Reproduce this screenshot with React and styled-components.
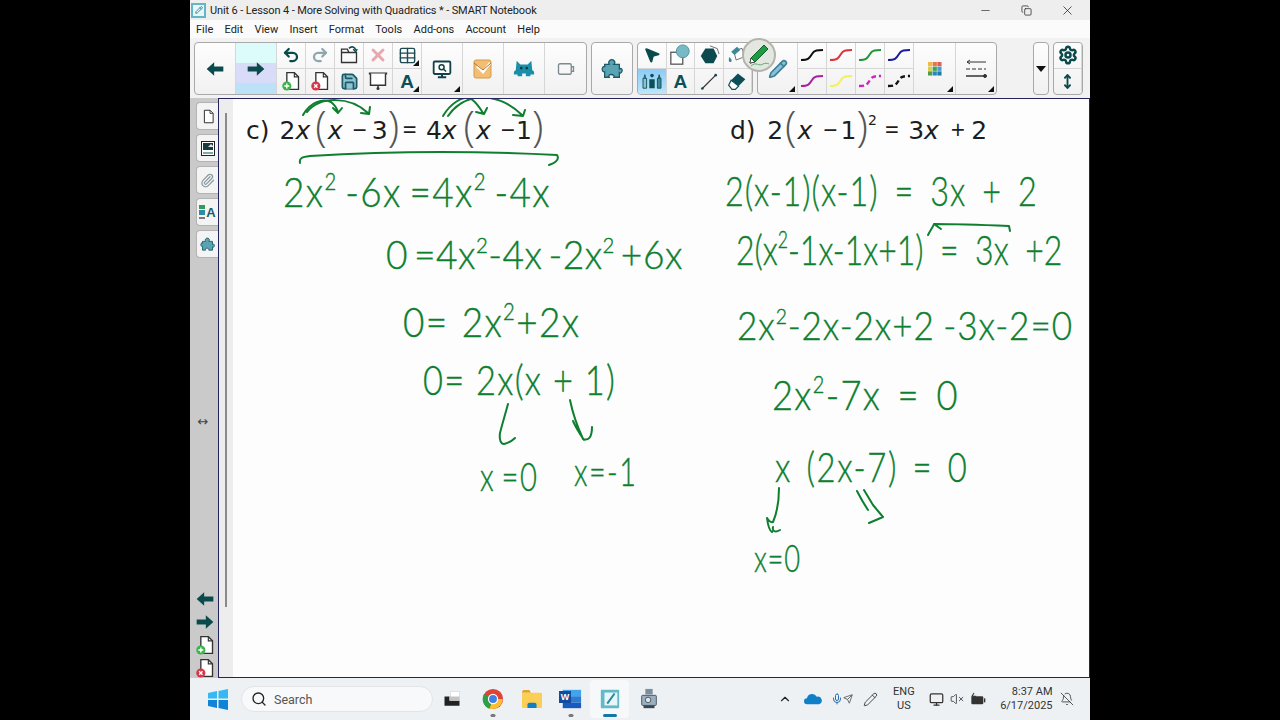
import React from 'react'
import styled, { createGlobalStyle } from 'styled-components'
import { Undo2, Redo2, X, Table, Save, Search, ChevronUp, Mic, Send, VolumeX, Minus, Settings, MoveVertical, Copy, Monitor, BellOff, Pencil, MousePointer2, Paperclip } from 'lucide-react'

const GlobalStyle = createGlobalStyle`
    html, body { margin: 0; padding: 0; background: #000; height: 100%; overflow: hidden; }
    * { box-sizing: border-box; }
`

const Frame = styled.div`
    width: 900px;
    height: 720px;
    margin: 0 auto;
    display: flex;
    flex-direction: column;
    background: #f0f0f0;
    font-family: Roboto, "Noto Sans", sans-serif;
    color: #222;
`

const TitleBar = styled.div`
    height: 20px;
    display: flex;
    align-items: center;
    padding: 0 2.5px 0 1px;
    background: #eeeeee;
    font-size: 11px;
    letter-spacing: -0.13px;
`

const AppBadge = styled.span`
    width: 15px;
    height: 15px;
    margin-right: 4px;
    display: flex;
    align-items: center;
    justify-content: center;
    border: 2px solid #62b6c6;
    background: #e8f6f8;
    color: #3a8fa3;
`

const TitleText = styled.span`
    flex: 1;
`

const WindowButton = styled.span`
    width: 41px;
    height: 20px;
    display: flex;
    align-items: center;
    justify-content: center;
    color: #222;
`

const MenuBar = styled.div`
    height: 18px;
    display: flex;
    align-items: center;
    gap: 11.25px;
    padding-left: 6px;
    background: #fbfbfb;
    font-size: 11px;
`

const Toolbar = styled.div`
    height: 60px;
    display: flex;
    gap: 4px;
    padding: 4px 0 3px 4px;
    background: #f2f2f2;
    position: relative;
`

const ToolGroup = styled.div`
    display: flex;
    height: 53px;
    border: 1px solid #a9a9a9;
    border-radius: 4px;
    overflow: hidden;
    background: linear-gradient(#fdfdfd, #f1f1f1);
    margin-left: ${p => p.$gap || 0}px;
`

const BigCell = styled.div`
    position: relative;
    width: ${p => p.$w || 41}px;
    display: flex;
    align-items: center;
    justify-content: center;
    border-right: 1px solid #d6d6d6;
    background: ${p => p.$active ? 'linear-gradient(#dcfbfb 0 40%, #d9dcf8 40% 78%, #bde2f8 78%)' : 'transparent'};
    &:last-child { border-right: 0; }
`

const SmallGrid = styled.div`
    display: grid;
    grid-template-columns: repeat(${p => p.$cols}, ${p => p.$cw || 29}px);
    grid-template-rows: 1fr 1fr;
`

const SmallCell = styled.div`
    position: relative;
    display: flex;
    align-items: center;
    justify-content: center;
    border-right: 1px solid #d6d6d6;
    border-bottom: 1px solid #d6d6d6;
    background: ${p => p.$active ? 'linear-gradient(#8ccbf5, #bfe5fb)' : 'transparent'};
    &:nth-child(n + ${p => p.$cols + 1}) { border-bottom: 0; }
`

const Corner = styled.span`
    position: absolute;
    right: 2px;
    bottom: 2px;
    width: 0;
    height: 0;
    border-left: 6px solid transparent;
    border-bottom: 6px solid #111;
`

const PenBubble = styled.div`
    position: absolute;
    left: 552px;
    top: 0;
    width: 34px;
    height: 34px;
    border-radius: 50%;
    border: 2px solid #b4b4ae;
    background: #e4e6e0;
    display: flex;
    align-items: center;
    justify-content: center;
`

const LetterA = styled.span`
    font-family: "Liberation Sans", sans-serif;
    font-weight: 700;
    font-size: ${p => p.$size || 19}px;
    line-height: 1;
    color: ${p => p.$color || '#0c4f57'};
`

const Workspace = styled.div`
    height: 580px;
    display: flex;
    background: #c9c9c9;
`

const SideTabs = styled.div`
    width: 28px;
    display: flex;
    flex-direction: column;
    align-items: flex-end;
    padding-top: 4px;
    gap: 4px;
    background: #cacaca;
`

const SideTab = styled.div`
    width: 22px;
    height: 28px;
    display: flex;
    align-items: center;
    justify-content: center;
    gap: 1px;
    border: 1px solid #b3b3b3;
    border-right: 0;
    border-radius: 4px 0 0 4px;
    background: #f4f4f4;
`

const ResizeMark = styled.div`
    width: 100%;
    margin-top: 150px;
    height: 20px;
    text-align: center;
    font-family: "DejaVu Sans", sans-serif;
    font-size: 13px;
    line-height: 20px;
    padding-right: 2px;
    color: #444;
`

const SideFoot = styled.div`
    width: 100%;
    margin-top: auto;
    display: flex;
    flex-direction: column;
    align-items: center;
    gap: 3px;
    padding: 0 0 0 2px;
`

const Stage = styled.div`
    flex: 1;
    display: flex;
    border: 1.5px solid #23235f;
`

const Gutter = styled.div`
    width: 14px;
    background: #ededed;
    position: relative;
`

const ScrollThumb = styled.div`
    position: absolute;
    left: 6px;
    top: 14px;
    width: 2px;
    height: 494px;
    background: #8a8a8a;
`

const Page = styled.div`
    flex: 1;
    position: relative;
    background: #fdfdfd;
`

const InkLayer = styled.svg`
    position: absolute;
    left: 0;
    top: 0;
    width: 855px;
    height: 577px;
    pointer-events: none;
`

/* handwriting, placed where it sits on the page */
const Ink = styled.div`
    position: absolute;
    left: ${p => p.$x - 233}px;
    top: ${p => p.$base - 99 - p.$size}px;
    white-space: pre;
    line-height: ${p => p.$size * 1.25}px;
    font-family: "Lato", sans-serif;
    font-weight: 300;
    font-size: ${p => p.$size}px;
    letter-spacing: ${p => p.$ls || 0}px;
    word-spacing: ${p => p.$ws || 0}px;
    color: #0e7f2f;
    -webkit-text-stroke: 0.4px #0e7f2f;
    transform: scaleX(${p => p.$sx || 1});
    transform-origin: left center;
`

const Sup = styled.span`
    font-size: 0.55em;
    position: relative;
    top: -0.75em;
`

/* the typed exercise lines */
const Typed = styled.div`
    position: absolute;
    left: ${p => p.$x - 233}px;
    top: 3px;
    height: 44px;
    line-height: 44px;
    white-space: pre;
    font-family: "DejaVu Sans", sans-serif;
    font-size: 25px;
    color: #1d1d1d;
`

const Part = styled.span`
    margin-left: ${p => p.$l || 0}px;
`

const Var = styled(Part)`
    font-style: italic;
`

const Op = styled(Part)`
    font-family: "Open Sans", sans-serif;
`

const Paren = styled(Part)`
    font-family: "Open Sans", sans-serif;
    font-weight: 300;
    font-size: 42px;
    line-height: 42px;
    color: #555;
    position: relative;
    top: 2px;
`

const TypedSup = styled(Part)`
    font-size: 14px;
    position: relative;
    top: -14px;
`

const Taskbar = styled.div`
    height: 42px;
    display: flex;
    align-items: center;
    background: #eef1f4;
    padding-left: 17px;
`

const StartButton = styled.div`
    width: 22px;
    height: 22px;
    margin-right: 12px;
`

const SearchBox = styled.div`
    width: 192px;
    height: 26px;
    display: flex;
    align-items: center;
    gap: 7px;
    padding-left: 9px;
    border: 1px solid #e2e4e6;
    border-radius: 13px;
    background: #f8f9fa;
    color: #555;
    font-size: 12.5px;
`

const TaskIcons = styled.div`
    display: flex;
    margin-left: -1px;
`

const TaskIcon = styled.div`
    position: relative;
    width: 39px;
    height: 38px;
    display: flex;
    align-items: center;
    justify-content: center;
    margin-right: ${p => p.$after || 0}px;
    background: ${p => p.$active ? '#f6f8fa' : 'transparent'};
    border-radius: 4px;
    &::after {
        content: '';
        display: ${p => p.$mark ? 'block' : 'none'};
        position: absolute;
        bottom: 1px;
        left: 50%;
        transform: translateX(-50%);
        height: 3px;
        width: ${p => p.$mark === 'on' ? 14 : 5}px;
        border-radius: 2px;
        background: ${p => p.$mark === 'on' ? '#1178a8' : '#777'};
    }
`

const Tray = styled.div`
    margin-left: auto;
    display: flex;
    align-items: center;
    gap: 6px;
    padding-right: 16px;
    font-size: 11px;
    color: #333;
`

const TrayItem = styled.span`
    display: flex;
    align-items: center;
    margin-left: ${p => p.$l || 0}px;
`

const TrayStack = styled.div`
    display: flex;
    flex-direction: column;
    align-items: ${p => p.$align || 'center'};
    line-height: 14px;
    margin: 0 ${p => p.$mr || 0}px 0 ${p => p.$ml || 0}px;
`

const page = { dark: '#0a4a4c', teal: '#3e8797' }

const Arrow = ({ left, size = 20, color = page.dark }) => (
    <svg width={size} height={size} viewBox="0 0 24 24">
        <path d={left ? 'M2 12 11 4V9H22V15H11V20Z' : 'M22 12 13 4V9H2V15H13V20Z'} fill={color} />
    </svg>
)

const PageIcon = ({ badge, size = 20 }) => (
    <svg width={size} height={size} viewBox="0 0 24 24">
        <path d="M7 2H16L21 7V22H7Z" fill="#fff" stroke="#333" strokeWidth="1.6" />
        <path d="M16 2V7H21" fill="none" stroke="#333" strokeWidth="1.4" />
        {badge && <circle cx="7" cy="18" r="5.5" fill={badge} />}
        {badge && <path d={badge === '#3cb44b' ? 'M4 18H10M7 15V21' : 'M5 16 9 20M9 16 5 20'} stroke="#fff" strokeWidth="1.6" />}
    </svg>
)

const OpenFile = () => (
    <svg width="20" height="20" viewBox="0 0 24 24" fill="none" stroke="#333" strokeWidth="1.6">
        <path d="M3 9H21V21H3ZM3 9V5H10L12 9" />
        <path d="M12 4C15 1 19 2 20 6" stroke={page.dark} strokeWidth="2" />
        <path d="M17 5 20 8 22 5" stroke={page.dark} strokeWidth="1.6" />
    </svg>
)

const Screen = () => (
    <svg width="20" height="20" viewBox="0 0 24 24" fill="none" stroke="#333" strokeWidth="1.7">
        <path d="M1 3H23" strokeWidth="2.4" />
        <path d="M3 3V17H21V3" fill="#fff" />
        <path d="M12 17V21" />
        <circle cx="12" cy="21" r="1" />
    </svg>
)

const Capture = () => (
    <svg width="20" height="20" viewBox="0 0 24 24">
        <rect x="2" y="3" width="20" height="15" rx="1.5" fill="#fff" stroke="#13414a" strokeWidth="2.2" />
        <circle cx="11.5" cy="10" r="3" fill="none" stroke="#13414a" strokeWidth="1.8" />
        <path d="M14 12.5 17 15" stroke="#13414a" strokeWidth="1.8" />
        <path d="M12 18V21M7 22H17" stroke="#13414a" strokeWidth="2.4" />
    </svg>
)

const Gallery = () => (
    <svg width="14" height="15" viewBox="0 0 14 15">
        <rect x="0.5" y="0.5" width="13" height="14" fill="#fff" stroke="#222" />
        <rect x="2" y="2" width="10" height="7" fill="#183a40" />
        <path d="M7 6 10 3 12 5V6Z" fill="#e6e6e6" />
        <rect x="2" y="11" width="10" height="2" fill="#7fa7ae" />
    </svg>
)

const Response = () => (
    <svg width="24" height="24" viewBox="0 0 24 24">
        <rect x="3" y="3" width="17" height="18" rx="2" fill="#f3bd74" stroke="#d49a4a" />
        <path d="M6 9 12 15 19 6" fill="none" stroke="#fff" strokeWidth="2.6" />
        <path d="M3 6 12 13 20 6" fill="none" stroke="#a9772f" strokeWidth="1" />
    </svg>
)

const Monster = () => (
    <svg width="22" height="22" viewBox="0 0 24 24">
        <path d="M4 3 8 7H16L20 3 21 13 23 15V18H19V20H14V17H10V20H5V18H1V15L3 13Z" fill="#1c8fa8" />
        <circle cx="9" cy="11" r="1.5" fill="#083b47" />
        <circle cx="15" cy="11" r="1.5" fill="#083b47" />
    </svg>
)

const Record = () => (
    <svg width="18" height="18" viewBox="0 0 24 24" fill="none" stroke="#7d8a8f" strokeWidth="1.8">
        <rect x="2" y="5" width="17" height="14" rx="2" />
        <path d="M19 9H22V15H19" />
    </svg>
)

const PuzzlePiece = ({ size = 22 }) => (
    <svg width={size} height={size} viewBox="0 0 24 24">
        <path d="M9 7C7 3 11 1 13 2 15 3 16 5 14 7H20V12C23 10 24 14 22 16 21 17 21 17 20 16V21H14C15 19 13 18 11 18 9 18 8 19 9 21H4V15C1 16 1 11 2 10 3 9 4 9 4 10V7Z" fill="#5aa3b2" stroke="#1c5a68" strokeWidth="1.4" />
    </svg>
)

const Shapes = () => (
    <svg width="22" height="22" viewBox="0 0 24 24">
        <rect x="2" y="9" width="13" height="13" fill="#fff" stroke="#555" strokeWidth="1.4" />
        <circle cx="15" cy="8" r="7" fill="#78b9c6" stroke="#4f8f9d" />
    </svg>
)

const Hexagon = () => (
    <svg width="22" height="22" viewBox="0 0 24 24">
        <path d="M13 2 21 5 23 11" fill="none" stroke="#666" />
        <path d="M8 5H17L21 13 17 21H8L3 13Z" fill="#0d4a50" />
    </svg>
)

const Fill = () => (
    <svg width="20" height="20" viewBox="0 0 24 24">
        <path d="M8 7 18 4 21 14 11 18Z" fill="#fff" stroke="#555" />
        <path d="M3 14C1 18 3 22 5 20 7 18 4 16 3 14Z" fill="#3e8797" />
        <path d="M5 8 12 2 16 6 9 12Z" fill="#3e8797" />
    </svg>
)

const Pens = () => (
    <svg width="22" height="18" viewBox="0 0 24 20">
        <path d="M2 7H6V18H2ZM3 7 4 3 5 7" fill="#8fc1cc" stroke="#0c4f57" />
        <circle cx="12" cy="4" r="2" fill="#0c4f57" />
        <path d="M9 8H15V18H9Z" fill="#0c4f57" />
        <path d="M18 7H22V18H18ZM19 7 20 3 21 7" fill="#3e8797" stroke="#0c4f57" />
    </svg>
)

const Line = () => (
    <svg width="20" height="20" viewBox="0 0 24 24">
        <path d="M4 21 20 5" stroke="#333" strokeWidth="1.4" />
        <circle cx="4" cy="21" r="1.6" fill="#0c4f57" />
        <circle cx="20" cy="5" r="1.6" fill="#0c4f57" />
    </svg>
)

const EraserIcon = () => (
    <svg width="20" height="20" viewBox="0 0 24 24">
        <path d="M13 3 22 10 14 18 5 11Z" fill="#0c4f57" />
        <path d="M5 11 14 18 10 22H6L2 17Z" fill="#fff" stroke="#0c4f57" strokeWidth="1.4" />
    </svg>
)

const Squiggle = ({ color, dash, width = 2 }) => (
    <svg width="24" height="16" viewBox="0 0 24 16">
        <path d="M1 13C8 13 9 12 12 7 14 3 18 3 23 3" fill="none" stroke={color} strokeWidth={width} strokeDasharray={dash} />
    </svg>
)

const BubblePen = () => (
    <svg width="26" height="26" viewBox="0 0 26 26">
        <path d="M5 16 18 3 22 7 9 20 4 21Z" fill="#1f9a45" stroke="#14602c" />
        <path d="M4 21 5 16 9 20Z" fill="#fff" stroke="#333" strokeWidth="0.8" />
        <path d="M5 24C10 19 13 25 17 22 19 21 21 21 23 22" fill="none" stroke="#5cab72" />
    </svg>
)

const Palette = () => (
    <svg width="14" height="14" viewBox="0 0 12 12">
        {['#f0b94a', '#e6793f', '#dd5f5a', '#d9cf3f', '#3ba55d', '#4a9ad6', '#4f9e4f', '#2e86c1', '#1b7fa3'].map((c, i) => (
            <rect key={i} x={(i % 3) * 4} y={Math.floor(i / 3) * 4} width="3.6" height="3.6" fill={c} />
        ))}
    </svg>
)

const LineStyles = () => (
    <svg width="24" height="20" viewBox="0 0 24 20" fill="none" stroke="#333">
        <path d="M3 3H22" strokeWidth="1.2" />
        <path d="M6 1 3 3 6 5" strokeWidth="1" />
        <path d="M2 10H22" strokeWidth="1.2" strokeDasharray="4 2" />
        <path d="M2 17H22" strokeWidth="1.4" />
        <circle cx="21" cy="17" r="1.5" fill="#333" />
    </svg>
)

const SmallCaret = () => (
    <svg width="10" height="6" viewBox="0 0 10 6"><path d="M0 0H10L5 6Z" fill="#111" /></svg>
)

const Bars = () => (
    <svg width="6" height="16" viewBox="0 0 6 16">
        <rect y="1" width="6" height="4" fill="#2f9c5a" />
        <rect y="6" width="6" height="5" fill="#2f8aa5" />
        <rect y="13" width="6" height="2" fill="#7a7a7a" />
    </svg>
)

const WinLogo = () => (
    <svg width="22" height="22" viewBox="0 0 22 22">
        <path d="M1 5 10 3V10.5H1Z" fill="#35b8f3" />
        <path d="M11.5 3 21 1V10.5H11.5Z" fill="#35b8f3" />
        <path d="M1 12H10V20L1 18Z" fill="#0f84d6" />
        <path d="M11.5 12H21V22L11.5 20Z" fill="#0f84d6" />
    </svg>
)

const Chrome = () => (
    <svg width="22" height="22" viewBox="0 0 24 24">
        <circle cx="12" cy="12" r="11" fill="#dd4437" />
        <path d="M12 12 22.5 12A11 11 0 0 1 8 22.3Z" fill="#fbc02d" />
        <path d="M12 12 8 22.5A11 11 0 0 1 2.3 6.5Z" fill="#2e9e48" />
        <circle cx="12" cy="12" r="5.6" fill="#fff" />
        <circle cx="12" cy="12" r="4.3" fill="#3f7fe6" />
    </svg>
)

const Folder = () => (
    <svg width="22" height="20" viewBox="0 0 24 22">
        <path d="M1 4C1 2 2 1 3 1H9L11 4Z" fill="#e0a325" />
        <rect x="1" y="4" width="22" height="17" rx="1.5" fill="#fbcf55" />
        <path d="M7 21V17C7 16 8 15 9 15H15C16 15 17 16 17 17V21Z" fill="#127fc4" />
    </svg>
)

const WordMark = styled.span`
    position: absolute;
    left: 8px;
    top: 11px;
    width: 12px;
    height: 12px;
    background: #124a9c;
    color: #fff;
    font: 700 9px/12px "Liberation Sans", sans-serif;
    text-align: center;
`

const Word = () => (
    <svg width="22" height="22" viewBox="0 0 24 24">
        <rect x="3" y="2" width="20" height="7" fill="#41a5ee" />
        <rect x="3" y="9" width="20" height="7" fill="#2b7cd3" />
        <rect x="3" y="16" width="20" height="6" fill="#185abd" />
    </svg>
)

const Notebook = ({ size = 22 }) => (
    <svg width={size} height={size} viewBox="0 0 24 24">
        <rect x="2" y="2" width="20" height="20" rx="1" fill="#62bac8" />
        <rect x="6" y="5" width="14" height="14" fill="#e7f6f8" />
        <path d="M9 17 17 6" stroke="#2f8798" strokeWidth="2.2" />
    </svg>
)

const Snip = () => (
    <svg width="22" height="24" viewBox="0 0 24 24">
        <rect x="8" y="1" width="8" height="6" fill="#7b8ea0" />
        <rect x="4" y="8" width="16" height="11" rx="1" fill="#9ab0c0" stroke="#44515c" />
        <circle cx="11" cy="13" r="3" fill="#dfe7ec" stroke="#44515c" />
        <rect x="6" y="19" width="12" height="3" fill="#3a4650" />
    </svg>
)

const Cloud = () => (
    <svg width="18" height="14" viewBox="0 0 24 16"><path d="M4 15A4 4 0 0 1 4 7 7 7 0 0 1 17 5 5 5 0 0 1 20 15Z" fill="#0f80c8" /></svg>
)

const Stack = () => (
    <svg width="20" height="20" viewBox="0 0 24 24">
        <rect x="10" y="3" width="11" height="11" fill="#fff" stroke="#ddd" />
        <path d="M3 9H9V14H21V20H3Z" fill="#222" />
        <path d="M9 9H21V14H9Z" fill="#c4c4c4" />
    </svg>
)

const Battery = () => (
    <svg width="16" height="14" viewBox="0 0 24 20">
        <rect x="2" y="6" width="18" height="12" rx="2" fill="#333" />
        <rect x="21" y="9" width="2" height="6" fill="#333" />
        <path d="M6 1 3 6H8L5 10" fill="none" stroke="#333" strokeWidth="1.6" />
    </svg>
)

const curves = [
    // arcs over the left equation
    'M303 115C310 102 323 98 331 102 335 105 337 109 338 112M333 108 338 113 342 108',
    'M307 112C320 96 350 96 368 113M361 113 369 114 370 107',
    'M443 116C450 104 462 96 470 98 476 102 480 108 483 113M476 112 484 114 487 108',
    'M448 116C456 104 466 100 474 98M490 98C502 100 514 107 522 115M513 115 523 116 525 110',
    // bracket under it
    'M300 163C299 158 302 157 310 156 390 151 480 151 557 155 559 158 558 162 549 165',
    // right overline
    'M1010 231 1009 226C985 225 955 224 934 224 933 227 930 231 928 235M934 224 941 229',
    // left down arrows
    'M508 404C505 415 502 425 500 433 499 440 501 444 504 444 508 443 512 441 515 438',
    'M570 400C573 415 578 428 583 439 588 441 592 438 592 427M573 421C576 428 580 434 584 440',
    // right down arrows
    'M779 488C779 502 776 515 773 522 770 523 767 518 767 518M773 527C772 531 775 533 780 530 M767 518C768 526 770 531 772 532',
    'M857 491C860 497 864 504 868 510M864 490 873 505 883 517 869 523',
]

const inkLines = [
    { x: 283, base: 207, size: 41, ls: 1.5, ws: -4, sx: 0.9, parts: ['2x', '2', ' -6x =4x', '2', ' -4x'] },
    { x: 386, base: 269, size: 40, ls: 0.5, ws: -5, sx: 0.93, parts: ['0 =4x', '2', '-4x -2x', '2', ' +6x'] },
    { x: 403, base: 337, size: 41, ls: 1.5, ws: 2, sx: 0.9, parts: ['0= 2x', '2', '+2x'] },
    { x: 423, base: 395, size: 41, ls: 1.5, ws: 0, sx: 0.84, parts: ['0= 2x(x + 1)'] },
    { x: 480, base: 491, size: 40, ls: 2, ws: -4, sx: 0.73, parts: ['x =0'] },
    { x: 574, base: 486, size: 40, ls: 2, ws: 0, sx: 0.72, parts: ['x=-1'] },
    { x: 725, base: 206, size: 41, ls: 1.2, ws: 8, sx: 0.79, parts: ['2(x-1)(x-1) = 3x + 2'] },
    { x: 736, base: 265, size: 41, ls: 0, ws: 10, sx: 0.78, parts: ['2(x', '2', '-1x-1x+1) = 3x +2'] },
    { x: 737, base: 340, size: 39, ls: 1, ws: -2, sx: 0.9, parts: ['2x', '2', '-2x-2x+2 -3x-2=0'] },
    { x: 772, base: 410, size: 41, ls: 1.5, ws: 6, sx: 0.885, parts: ['2x', '2', '-7x = 0'] },
    { x: 775, base: 482, size: 41, ls: 2, ws: 5, sx: 0.8, parts: ['x (2x-7) = 0'] },
    { x: 754, base: 572, size: 38, ls: 1, ws: 0, sx: 0.72, parts: ['x=0'] },
]

class App extends React.Component {
    render() {
        return (
            <Frame>
                <GlobalStyle />
                <TitleBar>
                    <AppBadge><Pencil size={8} strokeWidth={3} /></AppBadge>
                    <TitleText>Unit 6 - Lesson 4 - More Solving with Quadratics * - SMART Notebook</TitleText>
                    <WindowButton><Minus size={13} strokeWidth={1.2} /></WindowButton>
                    <WindowButton><Copy size={11} strokeWidth={1.6} /></WindowButton>
                    <WindowButton><X size={15} strokeWidth={1.2} /></WindowButton>
                </TitleBar>
                <MenuBar>
                    {['File', 'Edit', 'View', 'Insert', 'Format', 'Tools', 'Add-ons', 'Account', 'Help'].map(m => <span key={m}>{m}</span>)}
                </MenuBar>
                <Toolbar>
                    <ToolGroup>
                        <BigCell><Arrow left /></BigCell>
                        <BigCell $active><Arrow /></BigCell>
                        <SmallGrid $cols={5}>
                            <SmallCell $cols={5}><Undo2 size={18} strokeWidth={3} color={page.dark} /></SmallCell>
                            <SmallCell $cols={5}><Redo2 size={18} strokeWidth={3} color="#8ea6b0" /></SmallCell>
                            <SmallCell $cols={5}><OpenFile /></SmallCell>
                            <SmallCell $cols={5}><X size={20} strokeWidth={3.5} color="#e9a7ae" /></SmallCell>
                            <SmallCell $cols={5}><Table size={19} color="#1c4a50" strokeWidth={1.8} /><Corner /></SmallCell>
                            <SmallCell $cols={5}><PageIcon badge="#3cb44b" /></SmallCell>
                            <SmallCell $cols={5}><PageIcon badge="#d8364a" /></SmallCell>
                            <SmallCell $cols={5}><Save size={19} color="#1c5a68" strokeWidth={2.2} fill="#8fc3cf" /></SmallCell>
                            <SmallCell $cols={5}><Screen /></SmallCell>
                            <SmallCell $cols={5}><LetterA>A</LetterA><Corner /></SmallCell>
                        </SmallGrid>
                        <BigCell><Capture /><Corner /></BigCell>
                        <BigCell><Response /></BigCell>
                        <BigCell><Monster /></BigCell>
                        <BigCell><Record /></BigCell>
                    </ToolGroup>
                    <ToolGroup>
                        <BigCell $w={40}><PuzzlePiece /></BigCell>
                    </ToolGroup>
                    <ToolGroup>
                        <SmallGrid $cols={4} $cw={28.5}>
                            <SmallCell $cols={4}><MousePointer2 size={18} color={page.dark} fill={page.dark} /></SmallCell>
                            <SmallCell $cols={4}><Shapes /></SmallCell>
                            <SmallCell $cols={4}><Hexagon /></SmallCell>
                            <SmallCell $cols={4}><Fill /></SmallCell>
                            <SmallCell $cols={4} $active><Pens /></SmallCell>
                            <SmallCell $cols={4}><LetterA>A</LetterA></SmallCell>
                            <SmallCell $cols={4}><Line /></SmallCell>
                            <SmallCell $cols={4}><EraserIcon /></SmallCell>
                        </SmallGrid>
                    </ToolGroup>
                    <ToolGroup>
                        <BigCell $w={40}><Pencil size={20} color="#3e7f9a" fill="#8cc0d8" /><Corner /></BigCell>
                        <SmallGrid $cols={4}>
                            <SmallCell $cols={4}><Squiggle color="#111" /></SmallCell>
                            <SmallCell $cols={4}><Squiggle color="#d8343a" /></SmallCell>
                            <SmallCell $cols={4}><Squiggle color="#22963a" /></SmallCell>
                            <SmallCell $cols={4}><Squiggle color="#1c1c9c" /></SmallCell>
                            <SmallCell $cols={4}><Squiggle color="#a8219c" /></SmallCell>
                            <SmallCell $cols={4}><Squiggle color="#f4ef5c" /></SmallCell>
                            <SmallCell $cols={4}><Squiggle color="#d41fc4" dash="5 3" width={2.4} /></SmallCell>
                            <SmallCell $cols={4}><Squiggle color="#111" dash="5 3" width={2.4} /></SmallCell>
                        </SmallGrid>
                        <BigCell $w={42}><Palette /><Corner /></BigCell>
                        <BigCell $w={40}><LineStyles /><Corner /></BigCell>
                    </ToolGroup>
                    <ToolGroup $gap={32}>
                        <BigCell $w={14}><SmallCaret /></BigCell>
                    </ToolGroup>
                    <ToolGroup>
                        <SmallGrid $cols={1} $cw={28}>
                            <SmallCell $cols={1}><Settings size={20} color={page.dark} strokeWidth={3} /></SmallCell>
                            <SmallCell $cols={1}><MoveVertical size={15} color={page.dark} strokeWidth={3} /></SmallCell>
                        </SmallGrid>
                    </ToolGroup>
                    <PenBubble>
                        <BubblePen />
                    </PenBubble>
                </Toolbar>
                <Workspace>
                    <SideTabs>
                        <SideTab><PageIcon size={15} /></SideTab>
                        <SideTab><Gallery /></SideTab>
                        <SideTab><Paperclip size={15} color="#8a9aa0" strokeWidth={2} /></SideTab>
                        <SideTab><Bars /><LetterA $color="#1c5a68" $size={13}>A</LetterA></SideTab>
                        <SideTab><PuzzlePiece size={15} /></SideTab>
                        <ResizeMark>↔</ResizeMark>
                        <SideFoot>
                            <Arrow left />
                            <Arrow />
                            <PageIcon badge="#3cb44b" />
                            <PageIcon badge="#d8364a" />
                        </SideFoot>
                    </SideTabs>
                    <Stage>
                        <Gutter><ScrollThumb /></Gutter>
                        <Page>
                            <Typed $x={246}>
                                c)<Part $l={10}>2</Part><Var>x</Var>
                                <Paren $l={5}>(</Paren><Var $l={1}>x</Var><Op $l={10}>−</Op><Part $l={5}>3</Part><Paren>)</Paren>
                                <Op $l={3.5}>=</Op><Part $l={9}>4</Part><Var>x</Var>
                                <Paren $l={7}>(</Paren><Var $l={1}>x</Var><Op $l={10}>−</Op><Part $l={1}>1</Part><Paren>)</Paren>
                            </Typed>
                            <Typed $x={730}>
                                d)<Part $l={11.5}>2</Part>
                                <Paren $l={2}>(</Paren><Var $l={1}>x</Var><Op $l={11}>−</Op><Part $l={3}>1</Part><Paren>)</Paren><TypedSup>2</TypedSup>
                                <Op $l={8}>=</Op><Part $l={9}>3</Part><Var>x</Var><Op $l={12}>+</Op><Part $l={6}>2</Part>
                            </Typed>
                            {inkLines.map((line, i) => (
                                <Ink key={i} $x={line.x} $base={line.base} $size={line.size} $ls={line.ls} $ws={line.ws} $sx={line.sx}>
                                    {line.parts.map((part, j) => j % 2 ? <Sup key={j}>{part}</Sup> : part)}
                                </Ink>
                            ))}
                            <InkLayer viewBox="233 99 855 577">
                                {curves.map((d, i) => (
                                    <path key={i} d={d} fill="none" stroke="#0e7f2f" strokeWidth="2" strokeLinecap="round" strokeLinejoin="round" />
                                ))}
                            </InkLayer>
                        </Page>
                    </Stage>
                </Workspace>
                <Taskbar>
                    <StartButton><WinLogo /></StartButton>
                    <SearchBox><Search size={16} color="#222" />Search</SearchBox>
                    <TaskIcons>
                        <TaskIcon $after={2}><Stack /></TaskIcon>
                        <TaskIcon $mark="off"><Chrome /></TaskIcon>
                        <TaskIcon><Folder /></TaskIcon>
                        <TaskIcon $mark="off"><Word /><WordMark>W</WordMark></TaskIcon>
                        <TaskIcon $active $mark="on"><Notebook /></TaskIcon>
                        <TaskIcon><Snip /></TaskIcon>
                    </TaskIcons>
                    <Tray>
                        <ChevronUp size={14} color="#222" strokeWidth={2} />
                        <TrayItem $l={6}><Cloud /></TrayItem>
                        <TrayItem $l={3}><Mic size={12} color="#2a6fb0" /><Send size={10} color="#555" /></TrayItem>
                        <TrayItem $l={3.5}><Pencil size={15} color="#333" strokeWidth={1.4} /></TrayItem>
                        <TrayStack $ml={9.5} $mr={8.5}><span>ENG</span><span>US</span></TrayStack>
                        <Monitor size={15} color="#333" />
                        <VolumeX size={14} color="#333" strokeWidth={1.4} />
                        <Battery />
                        <TrayStack $align="flex-end" $ml={8}><span>8:37 AM</span><span>6/17/2025</span></TrayStack>
                        <TrayItem $l={1.5}><BellOff size={14} color="#333" strokeWidth={1.4} /></TrayItem>
                    </Tray>
                </Taskbar>
            </Frame>
        )
    }
}

export default App
